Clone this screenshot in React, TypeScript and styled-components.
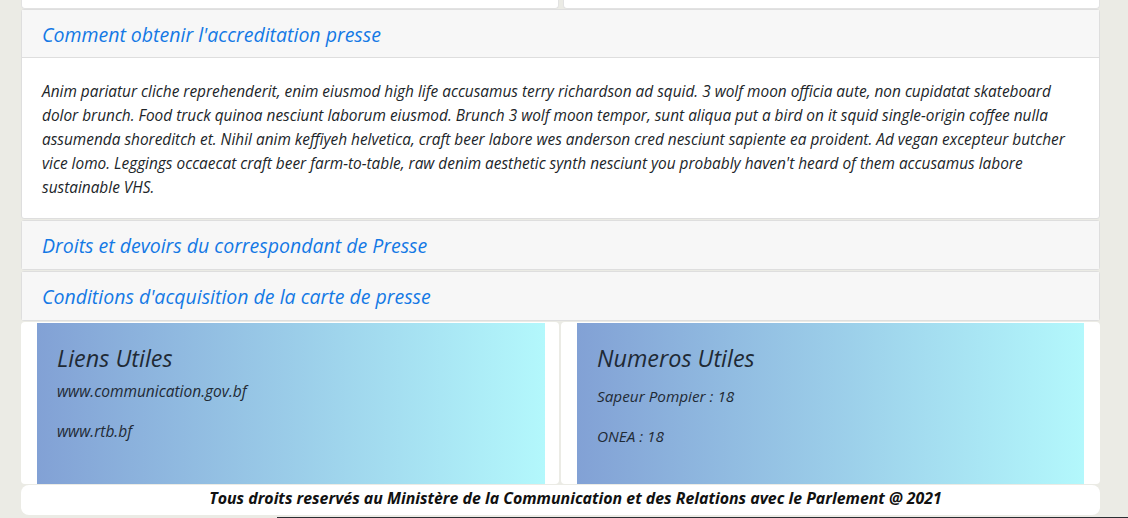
import React from "react";
import styled, { createGlobalStyle } from "styled-components";

const Global = createGlobalStyle`
  html, body { margin: 0; padding: 0; }
  body {
    background: #ebebe5;
    font-family: "Open Sans", "Noto Sans", sans-serif;
    color: #212529;
    overflow: hidden;
  }
`;

const Page = styled.div`
  height: 518px;
  display: flex;
  flex-direction: column;
  padding: 0 28px 0 21px;
  box-sizing: border-box;
  position: relative;
`;

const StubRow = styled.div`
  display: grid;
  grid-template-columns: 1fr 1fr;
  gap: 4px;
  height: 9px;
`;

const Stub = styled.div`
  background: #fff;
  border: 1px solid #e2e2e2;
  border-top: none;
  border-radius: 0 0 4px 4px;
`;

const Accordion = styled.div`
  display: flex;
  flex-direction: column;
`;

const Item = styled.div<{ $first?: boolean }>`
  background: #fff;
  border: 1px solid #dedede;
  border-radius: 3px;
  margin-top: ${(p) => (p.$first ? "0" : "1px")};
`;

const Header = styled.div<{ $open?: boolean }>`
  background: #f7f7f7;
  height: 48px;
  box-sizing: border-box;
  padding: 13px 20px 11px;
  font-style: italic;
  font-size: 19.5px;
  line-height: 24px;
  color: #1479e5;
  border-bottom: ${(p) => (p.$open ? "1px solid #dedede" : "none")};
`;

const Body = styled.div`
  padding: 22px 20px 18px;
  font-style: italic;
  font-size: 15.4px;
  line-height: 24px;
  color: #212529;
`;

const CardsRow = styled.div`
  display: grid;
  grid-template-columns: 538px 1fr;
  gap: 2px;
  margin-top: 1px;
  height: 162px;
`;

const Card = styled.div<{ $left: number; $right: number }>`
  background: #fff;
  border-radius: 4px;
  padding: 1px ${(p) => p.$right}px 0 ${(p) => p.$left}px;
  display: flex;
`;

const Gradient = styled.div`
  flex: 1;
  background: linear-gradient(to right, #82a1d5, #b3f8fc);
  padding: 20px 20px;
  font-style: italic;
  color: #1f2a35;
`;

const CardTitle = styled.div<{ $gap: number }>`
  font-size: 23.4px;
  line-height: 30px;
  margin-bottom: ${(p) => p.$gap}px;
`;

const LinkLine = styled.div<{ $size: number }>`
  font-size: ${(p) => p.$size}px;
  line-height: 24px;
  margin-bottom: 16px;
`;

const Footer = styled.div`
  margin-top: 1px;
  background: #fff;
  border-radius: 8px;
  height: 30px;
  box-sizing: border-box;
  display: flex;
  align-items: center;
  justify-content: center;
  padding: 0 0 4px 30px;
  font-weight: 700;
  font-style: italic;
  font-size: 15.9px;
  color: #111;
`;

const BottomEdge = styled.div`
  position: absolute;
  left: 277px;
  right: 0;
  bottom: 0;
  height: 1px;
  background: #2b2f33;
`;

const body =
  "Anim pariatur cliche reprehenderit, enim eiusmod high life accusamus terry richardson ad squid. 3 wolf moon officia aute, non cupidatat skateboard dolor brunch. Food truck quinoa nesciunt laborum eiusmod. Brunch 3 wolf moon tempor, sunt aliqua put a bird on it squid single-origin coffee nulla assumenda shoreditch et. Nihil anim keffiyeh helvetica, craft beer labore wes anderson cred nesciunt sapiente ea proident. Ad vegan excepteur butcher vice lomo. Leggings occaecat craft beer farm-to-table, raw denim aesthetic synth nesciunt you probably haven't heard of them accusamus labore sustainable VHS.";

export default function App() {
  return (
    <>
      <Global />
      <Page>
        <StubRow>
          <Stub />
          <Stub />
        </StubRow>
        <Accordion>
          <Item $first>
            <Header $open>Comment obtenir l'accreditation presse</Header>
            <Body>{body}</Body>
          </Item>
          <Item>
            <Header>Droits et devoirs du correspondant de Presse</Header>
          </Item>
          <Item>
            <Header>Conditions d'acquisition de la carte de presse</Header>
          </Item>
        </Accordion>
        <CardsRow>
          <Card $left={16} $right={14}>
            <Gradient>
              <CardTitle $gap={6}>Liens Utiles</CardTitle>
              <LinkLine $size={15.5}>www.communication.gov.bf</LinkLine>
              <LinkLine $size={15.5}>www.rtb.bf</LinkLine>
            </Gradient>
          </Card>
          <Card $left={16} $right={16}>
            <Gradient>
              <CardTitle $gap={11}>Numeros Utiles</CardTitle>
              <LinkLine $size={15.3}>Sapeur Pompier : 18</LinkLine>
              <LinkLine $size={15.3}>ONEA : 18</LinkLine>
            </Gradient>
          </Card>
        </CardsRow>
        <Footer>Tous droits reservés au Ministère de la Communication et des Relations avec le Parlement @ 2021</Footer>
        <BottomEdge />
      </Page>
    </>
  );
}
